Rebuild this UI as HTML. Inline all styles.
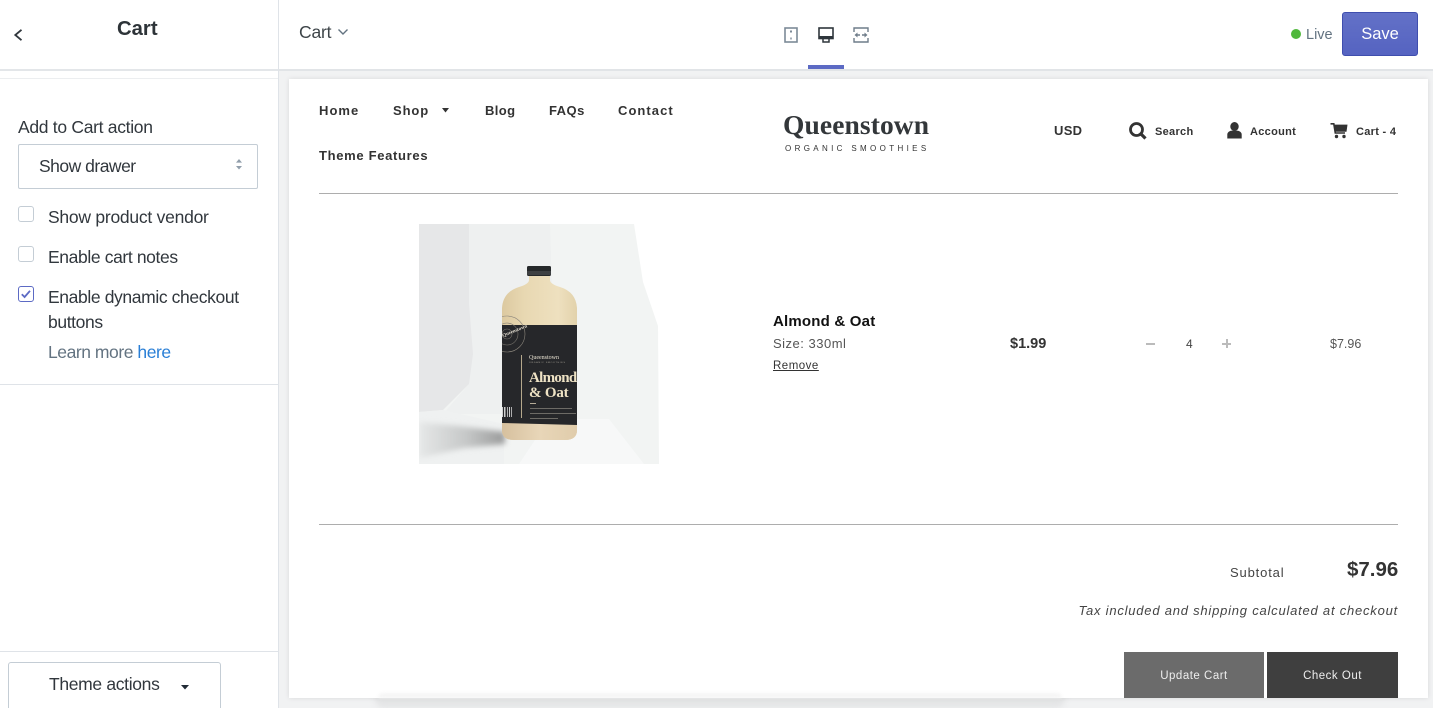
<!DOCTYPE html>
<html lang="en">
<head>
<meta charset="utf-8">
<title>Cart</title>
<style>
html,body{margin:0;padding:0;width:1433px;height:708px;overflow:hidden;background:#f4f6f8;font-family:"Liberation Sans",sans-serif;}
#wrap{position:relative;width:1433px;height:708px;overflow:hidden;background:#f1f2f3;}
.a{position:absolute;}
.t{position:absolute;white-space:nowrap;line-height:20px;}
.side{color:#31373d;font-size:17.5px;letter-spacing:-.38px;}
.nav{color:#333;font-size:13px;font-weight:bold;letter-spacing:1.05px;}
.util{color:#333;font-size:11px;font-weight:bold;letter-spacing:.3px;}
.cb{position:absolute;left:18px;width:14px;height:14px;border:1px solid #c4cdd5;border-radius:3px;background:#fff;}
svg{position:absolute;display:block;overflow:visible;}
</style>
</head>
<body>
<div id="wrap">

<!-- Sidebar -->
<div class="a" style="left:0;top:0;width:278px;height:708px;background:#fff;"></div>
<div class="a" style="left:278px;top:0;width:1px;height:708px;background:#dfe3e8;"></div>
<div class="a" style="left:0;top:69px;width:278px;height:2px;background:#e3e6e9;"></div>
<div class="a" style="left:0;top:78px;width:278px;height:1px;background:#eceef0;"></div>
<div class="a" style="left:0;top:384px;width:278px;height:1px;background:#dfe3e8;"></div>
<div class="a" style="left:0;top:651px;width:278px;height:1px;background:#dfe3e8;"></div>

<svg style="left:13px;top:29px" width="10" height="12" viewBox="0 0 10 12"><path d="M8.500 0.800 L2.300 6 L8.500 11.200" fill="none" stroke="#31373d" stroke-width="1.800"/></svg>
<div class="t" style="left:117px;top:19px;font-size:20.300px;font-weight:bold;color:#2d3338;">Cart</div>

<div class="t side" style="left:18px;top:117px;letter-spacing:-.3px;">Add to Cart action</div>
<div class="a" style="left:18px;top:144px;width:238px;height:43px;border:1px solid #c4cdd5;border-radius:2px;background:#fff;"></div>
<div class="t side" style="left:39px;top:156px;letter-spacing:-.5px;">Show drawer</div>
<svg style="left:235px;top:159px" width="8" height="11" viewBox="0 0 8 11"><path d="M4 0 L7 3.600 L1 3.600 Z M1 7 L7 7 L4 10.500 Z" fill="#919eab"/></svg>

<div class="cb" style="top:206px;"></div>
<div class="t side" style="left:48px;top:207px;letter-spacing:-.25px;">Show product vendor</div>
<div class="cb" style="top:246px;"></div>
<div class="t side" style="left:48px;top:247px;">Enable cart notes</div>
<div class="cb" style="top:286px;border-color:#5c6ac4;"></div>
<svg style="left:20px;top:288px" width="12" height="12" viewBox="0 0 12 12"><path d="M1.800 6.200 L4.600 9 L10 2.800" fill="none" stroke="#5c6ac4" stroke-width="1.800"/></svg>
<div class="t side" style="left:48px;top:287px;">Enable dynamic checkout</div>
<div class="t side" style="left:48px;top:312px;">buttons</div>
<div class="t side" style="left:48px;top:342px;color:#637381;letter-spacing:-.45px;">Learn more <span style="color:#2a7fd6;">here</span></div>

<div class="a" style="left:8px;top:662px;width:211px;height:60px;border:1px solid #c4cdd5;border-radius:3px;background:#fff;"></div>
<div class="t side" style="left:49px;top:674px;letter-spacing:-.33px;">Theme actions</div>
<svg style="left:181px;top:685px" width="8" height="5" viewBox="0 0 8 5"><path d="M0 0 L8 0 L4 4.500 Z" fill="#212b36"/></svg>

<!-- Top bar -->
<div class="a" style="left:279px;top:0;width:1154px;height:69px;background:#fff;"></div>
<div class="a" style="left:279px;top:69px;width:1154px;height:2px;background:#e1e4e7;"></div>
<div class="t" style="left:299px;top:22px;font-size:17.500px;color:#3d4448;letter-spacing:-.2px;">Cart</div>
<svg style="left:337px;top:28px" width="12" height="8" viewBox="0 0 12 8"><path d="M1.500 1.500 L6 6 L10.500 1.500" fill="none" stroke="#637381" stroke-width="1.400"/></svg>

<svg style="left:784px;top:27px" width="14" height="16" viewBox="0 0 14 16"><rect x="1" y="1" width="12" height="14" fill="#fff" stroke="#7c8a97" stroke-width="1.600"/><rect x="6" y="3.500" width="2" height="2" fill="#7c8a97"/><rect x="6" y="10.500" width="2" height="2" fill="#a4aeb8"/></svg>
<svg style="left:818px;top:27px" width="16" height="16" viewBox="0 0 16 16"><rect x="1" y="1" width="14" height="10.500" fill="#fff" stroke="#2f363c" stroke-width="1.600"/><rect x="1" y="9" width="14" height="2.500" fill="#2f363c"/><path d="M5 12 L5 15 L11 15 L11 12" fill="none" stroke="#2f363c" stroke-width="1.500"/></svg>
<svg style="left:853px;top:27px" width="16" height="16" viewBox="0 0 16 16"><path d="M1 5 L1 1 L15 1 L15 5 M1 11 L1 15 L15 15 L15 11" fill="none" stroke="#6f7d8a" stroke-width="1.400"/><path d="M3 8 L7 8 M13 8 L9 8" stroke="#6f7d8a" stroke-width="1.600"/><path d="M1.500 8 L4.500 5.500 L4.500 10.500 Z M14.500 8 L11.500 5.500 L11.500 10.500 Z" fill="#6f7d8a"/></svg>
<div class="a" style="left:808px;top:65px;width:36px;height:4px;background:#5c6ac4;"></div>

<div class="a" style="left:1291px;top:29px;width:10px;height:10px;border-radius:50%;background:#50b83c;"></div>
<div class="t" style="left:1306px;top:25px;font-size:14.500px;color:#637381;">Live</div>
<div class="a" style="left:1342px;top:12px;width:74px;height:42px;border:1px solid #3f4eae;border-radius:3px;background:linear-gradient(#6371c7,#5563c1);"></div>
<div class="t" style="left:1342px;top:24px;width:76px;text-align:center;font-size:16.500px;color:#fff;">Save</div>

<!-- Preview -->
<div class="a" style="left:375px;top:690px;width:690px;height:18px;background:#e4e5e6;border-radius:12px;filter:blur(3px);"></div>
<div class="a" style="left:289px;top:79px;width:1139px;height:619px;background:#fff;box-shadow:0 0 5px rgba(0,0,0,.1);"></div>

<div class="t nav" style="left:319px;top:101px;">Home</div>
<div class="t nav" style="left:393px;top:101px;letter-spacing:.9px;">Shop</div>
<svg style="left:442px;top:108px" width="7" height="5" viewBox="0 0 7 5"><path d="M0 0 L7 0 L3.500 4.500 Z" fill="#333"/></svg>
<div class="t nav" style="left:485px;top:101px;letter-spacing:.4px;">Blog</div>
<div class="t nav" style="left:549px;top:101px;letter-spacing:.45px;">FAQs</div>
<div class="t nav" style="left:618px;top:101px;">Contact</div>
<div class="t nav" style="left:319px;top:146px;letter-spacing:.68px;">Theme Features</div>

<div class="t" style="left:783px;top:110px;line-height:30px;font-family:'Liberation Serif',serif;font-weight:bold;font-size:27.500px;color:#33373a;letter-spacing:.1px;">Queenstown</div>
<div class="t" style="left:785px;top:139px;font-size:8px;color:#333;letter-spacing:3.350px;">ORGANIC SMOOTHIES</div>

<div class="t" style="left:1054px;top:121px;font-size:13px;font-weight:bold;color:#333;letter-spacing:.3px;">USD</div>
<svg style="left:1129px;top:122px" width="18" height="18" viewBox="0 0 18 18"><circle cx="7.500" cy="7.500" r="6" fill="none" stroke="#333" stroke-width="2.800"/><path d="M11.500 11.500 L16.500 16.500" stroke="#333" stroke-width="3.200"/></svg>
<div class="t util" style="left:1155px;top:122px;">Search</div>
<svg style="left:1227px;top:122px" width="15" height="17" viewBox="0 0 15 17"><ellipse cx="7.500" cy="4.500" rx="4.200" ry="4.500" fill="#333"/><path d="M0.300 16.500 L0.300 12.500 C0.300 10 3 8.600 5 8.600 L10 8.600 C12 8.600 14.700 10 14.700 12.500 L14.700 16.500 Z" fill="#333"/></svg>
<div class="t util" style="left:1250px;top:122px;">Account</div>
<svg style="left:1330px;top:123px" width="18" height="16" viewBox="0 0 18 16"><path d="M0.500 0.800 L3.800 0.800 L5.300 10 L15 10" fill="none" stroke="#333" stroke-width="1.600"/><path d="M3.800 1.600 L17.500 1.600 L16.500 8.800 L5 8.800 Z" fill="#333"/><circle cx="6.500" cy="13.500" r="1.700" fill="#333"/><circle cx="14" cy="13.500" r="1.700" fill="#333"/></svg>
<div class="t util" style="left:1356px;top:122px;">Cart - 4</div>

<div class="a" style="left:319px;top:193px;width:1079px;height:1px;background:#adadad;"></div>

<!-- Product image -->
<svg style="left:419px;top:224px;overflow:hidden" width="240" height="240" viewBox="0 0 240 240">
<defs>
<linearGradient id="milk" x1="0" x2="1" y1="0" y2="0">
<stop offset="0" stop-color="#dcc9a0"/><stop offset=".3" stop-color="#e8d8b2"/><stop offset=".75" stop-color="#eee0bf"/><stop offset="1" stop-color="#e2d2ab"/>
</linearGradient>
<linearGradient id="foot" x1="0" x2="1" y1="0" y2="0">
<stop offset="0" stop-color="#d6c09e"/><stop offset=".5" stop-color="#e8d6b8"/><stop offset="1" stop-color="#e0ccab"/>
</linearGradient>
<linearGradient id="shad" x1="0" x2="1" y1="0" y2="0">
<stop offset="0" stop-color="#e6e8e8"/><stop offset=".55" stop-color="#c6c8c8"/><stop offset="1" stop-color="#9a9b9b"/>
</linearGradient>
<filter id="bl" x="-20%" y="-60%" width="140%" height="220%"><feGaussianBlur stdDeviation="3"/></filter>
<clipPath id="rings"><rect x="83" y="85" width="40" height="60"/></clipPath>
</defs>
<path d="M0 0 L215 0 L224 58 L239 102 L240 240 L0 240 Z" fill="#f2f4f3"/>
<path d="M50 0 L131 0 L134 100 L128 160 L100 190 L24 190 L50 160 Z" fill="#eef0f0"/>
<path d="M0 0 L50 0 L50 80 L54 130 L50 160 L24 186 L0 188 Z" fill="#e6e7e8"/>
<path d="M0 188 L24 186 L85 200 L85 240 L0 240 Z" fill="#eff1f1"/>
<path d="M130 195 L190 195 L225 240 L100 240 Z" fill="#f7f8f8"/>
<path d="M0 198 L40 202 L86 208 L86 220 L45 224 L0 234 Z" fill="url(#shad)" filter="url(#bl)"/>
<!-- bottle -->
<path d="M110 51 L131 51 L131 56 Q131 60 141 63 Q157 68 158 84 L158 206 Q158 216 146 216 L95 216 Q83 216 83 206 L83 84 Q84 68 100 63 Q110 60 110 56 Z" fill="url(#milk)"/>
<path d="M83 198 L158 198 L158 206 Q158 216 146 216 L95 216 Q83 216 83 206 Z" fill="url(#foot)"/>
<rect x="108" y="42" width="24" height="10" rx="1.500" fill="#25282a"/>
<rect x="108" y="47" width="24" height="4" fill="#3d4042"/>
<path d="M83 101 L158 101 L158 201 L83 199 Z" fill="#26272a"/>
<g clip-path="url(#rings)">
<circle cx="88" cy="110" r="18" fill="none" stroke="#8b867c" stroke-width=".6"/>
<circle cx="88" cy="110" r="11" fill="none" stroke="#77736c" stroke-width=".6"/>
<circle cx="88" cy="110" r="5" fill="none" stroke="#77736c" stroke-width=".6"/>
<text x="84" y="113" transform="rotate(-22 84 113)" font-family="'Liberation Serif',serif" font-weight="bold" font-size="5" fill="#ddd8cc">Queenstown</text>
</g>
<rect x="102" y="131" width="1" height="63" fill="#b5a88c"/>
<text x="110" y="135" font-family="'Liberation Serif',serif" font-size="6" fill="#e8e2d2">Queenstown</text>
<text x="110" y="139" font-family="'Liberation Sans',sans-serif" font-size="2.200" letter-spacing=".75" fill="#aaa59a">ORGANIC SMOOTHIES</text>
<text x="110" y="158" font-family="'Liberation Serif',serif" font-weight="bold" font-size="15" letter-spacing="-.7" fill="#eee2c4">Almond</text>
<text x="110" y="173" font-family="'Liberation Serif',serif" font-weight="bold" font-size="15" letter-spacing="-.2" fill="#eee2c4">&amp; Oat</text>
<rect x="111" y="179" width="6" height=".8" fill="#d9ceb3"/>
<rect x="111" y="184" width="42" height="1" fill="#6d6b66"/>
<rect x="111" y="189" width="46" height="1" fill="#6d6b66"/>
<rect x="111" y="194" width="28" height="1" fill="#6d6b66"/>
<path d="M83 183 h1 v10 h-1z M85 183 h1.500 v10 h-1.500z M88 183 h.8 v10 h-.8z M90 183 h1 v10 h-1z M92 183 h.8 v10 h-.8z" fill="#cfcfcf"/>
</svg>

<!-- Line item -->
<div class="t" style="left:773px;top:312px;font-size:15px;font-weight:bold;color:#111;letter-spacing:.2px;">Almond &amp; Oat</div>
<div class="t" style="left:773px;top:334px;font-size:13px;color:#555;letter-spacing:.5px;">Size: 330ml</div>
<div class="t" style="left:773px;top:356px;font-size:11.500px;color:#333;letter-spacing:.5px;text-decoration:underline;">Remove</div>
<div class="t" style="left:1010px;top:334px;font-size:14.500px;font-weight:bold;color:#333;">$1.99</div>
<div class="a" style="left:1146px;top:343px;width:9px;height:1.500px;background:#bbb;"></div>
<div class="t" style="left:1186px;top:334px;font-size:12px;color:#444;">4</div>
<div class="a" style="left:1222px;top:343px;width:9px;height:1.500px;background:#bbb;"></div>
<div class="a" style="left:1226px;top:339px;width:1.500px;height:9px;background:#bbb;"></div>
<div class="t" style="left:1330px;top:334px;font-size:12.500px;color:#555;">$7.96</div>

<div class="a" style="left:319px;top:524px;width:1079px;height:1px;background:#adadad;"></div>

<!-- Totals -->
<div class="t" style="left:1230px;top:563px;font-size:13px;color:#444;letter-spacing:.85px;">Subtotal</div>
<div class="t" style="left:1347px;top:560px;font-size:20.500px;font-weight:bold;color:#333;">$7.96</div>
<div class="t" style="right:35px;top:601px;font-size:13px;font-style:italic;color:#444;letter-spacing:.78px;">Tax included and shipping calculated at checkout</div>
<div class="a" style="left:1124px;top:652px;width:140px;height:46px;background:#6b6b6b;"></div>
<div class="t" style="left:1124px;top:666px;width:140px;text-align:center;font-size:11.500px;color:#eee;letter-spacing:.5px;">Update Cart</div>
<div class="a" style="left:1267px;top:652px;width:131px;height:46px;background:#3f3f3f;"></div>
<div class="t" style="left:1267px;top:666px;width:131px;text-align:center;font-size:11.500px;color:#eee;letter-spacing:.5px;">Check Out</div>

<!-- bottom strip over preview -->
<div class="a" style="left:378px;top:693px;width:684px;height:5px;background:#f5f5f5;border-radius:6px 6px 0 0;filter:blur(1.500px);"></div>
</div>
</body>
</html>
